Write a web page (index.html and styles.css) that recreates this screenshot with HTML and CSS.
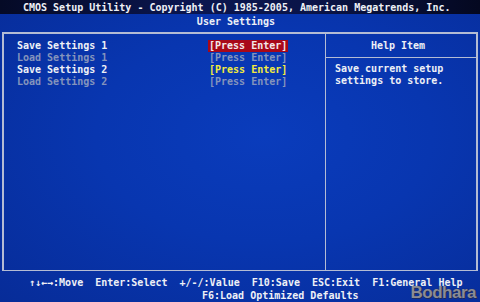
FILE: index.html
```html
<!DOCTYPE html>
<html>
<head>
  <title>User Settings</title>
  <link rel="stylesheet" href="styles.css">
</head>
<body>
  <div class="screen">
    <div class="title-bar">CMOS Setup Utility - Copyright (C) 1985-2005, American Megatrends, Inc.</div>
    <div class="page-title">User Settings</div>

    <div class="frame">
      <div class="menu">
        <div class="item">
          <span class="label">Save Settings 1</span>
          <span class="value selected">[Press Enter]</span>
        </div>
        <div class="item disabled">
          <span class="label">Load Settings 1</span>
          <span class="value">[Press Enter]</span>
        </div>
        <div class="item">
          <span class="label">Save Settings 2</span>
          <span class="value active">[Press Enter]</span>
        </div>
        <div class="item disabled">
          <span class="label">Load Settings 2</span>
          <span class="value">[Press Enter]</span>
        </div>
      </div>
      <div class="help">
        <div class="help-head">Help Item</div>
        <div class="help-text">Save current setup<br>settings to store.</div>
      </div>
    </div>

    <div class="keys">
      <div class="keys-line">&uarr;&darr;&larr;&rarr;:Move  Enter:Select  +/-/:Value  F10:Save  ESC:Exit  F1:General Help</div>
      <div class="keys-line second">F6:Load Optimized Defaults</div>
    </div>

    <div class="watermark">Bodhara</div>
  </div>
</body>
</html>
```
FILE: styles.css
```css
html, body {
  margin: 0;
  padding: 0;
  background-color: #000;
}

.screen {
  position: relative;
  width: 480px;
  height: 302px;
  overflow: hidden;
  font-family: "DejaVu Sans Mono", "Liberation Mono", monospace;
  font-weight: bold;
  font-size: 10px;
  color: #eef0f6;
  background: radial-gradient(ellipse at 55% 45%, #0a3cbc 0%, #0836b0 45%, #072c98 100%);
  display: flex;
  flex-direction: column;
}

.title-bar {
  height: 14px;
  line-height: 16px;
  padding-left: 23px;
  white-space: pre;
  background: linear-gradient(90deg, #050a26 0%, #0a1650 40%, #0a1448 65%, #040820 100%);
}

.page-title {
  height: 18px;
  line-height: 15px;
  text-align: center;
  padding-right: 8px;
}

.frame {
  display: grid;
  grid-template-columns: 322px 1fr;
  height: 237px;
  margin: 0 2px 0 2px;
  border: 2px solid #b4bcd4;
  border-bottom-width: 1px;
}

.menu {
  padding: 6px 0 0 13px;
  border-right: 1px solid #b4bcd4;
}

.item {
  display: flex;
  height: 12px;
  line-height: 12px;
  white-space: pre;
}

.label {
  width: 191px;
}

.value {
  padding: 0 1px;
}

.selected {
  background-color: #a80818;
  color: #f4e8e8;
}

.active {
  color: #f4ec3c;
}

.disabled {
  color: #8494bc;
}

.help {
  display: flex;
  flex-direction: column;
}

.help-head {
  height: 23px;
  line-height: 24px;
  text-align: center;
  padding-right: 6px;
  border-bottom: 1px solid #b4bcd4;
}

.help-text {
  padding: 5px 0 0 9px;
  line-height: 12px;
}

.keys {
  padding-top: 5px;
}

.keys-line {
  height: 13px;
  line-height: 13px;
  padding-left: 29px;
  white-space: pre;
}

.keys-line.second {
  padding-left: 202px;
}

.watermark {
  position: absolute;
  right: 4px;
  bottom: 1px;
  line-height: 17px;
  font-family: "Liberation Sans", Arial, sans-serif;
  font-size: 17px;
  font-weight: bold;
  color: rgba(170, 170, 180, 0.75);
  text-shadow: 0 0 1px #333, 1px 1px 0 rgba(40, 40, 60, 0.6);
  letter-spacing: -0.5px;
}
```
